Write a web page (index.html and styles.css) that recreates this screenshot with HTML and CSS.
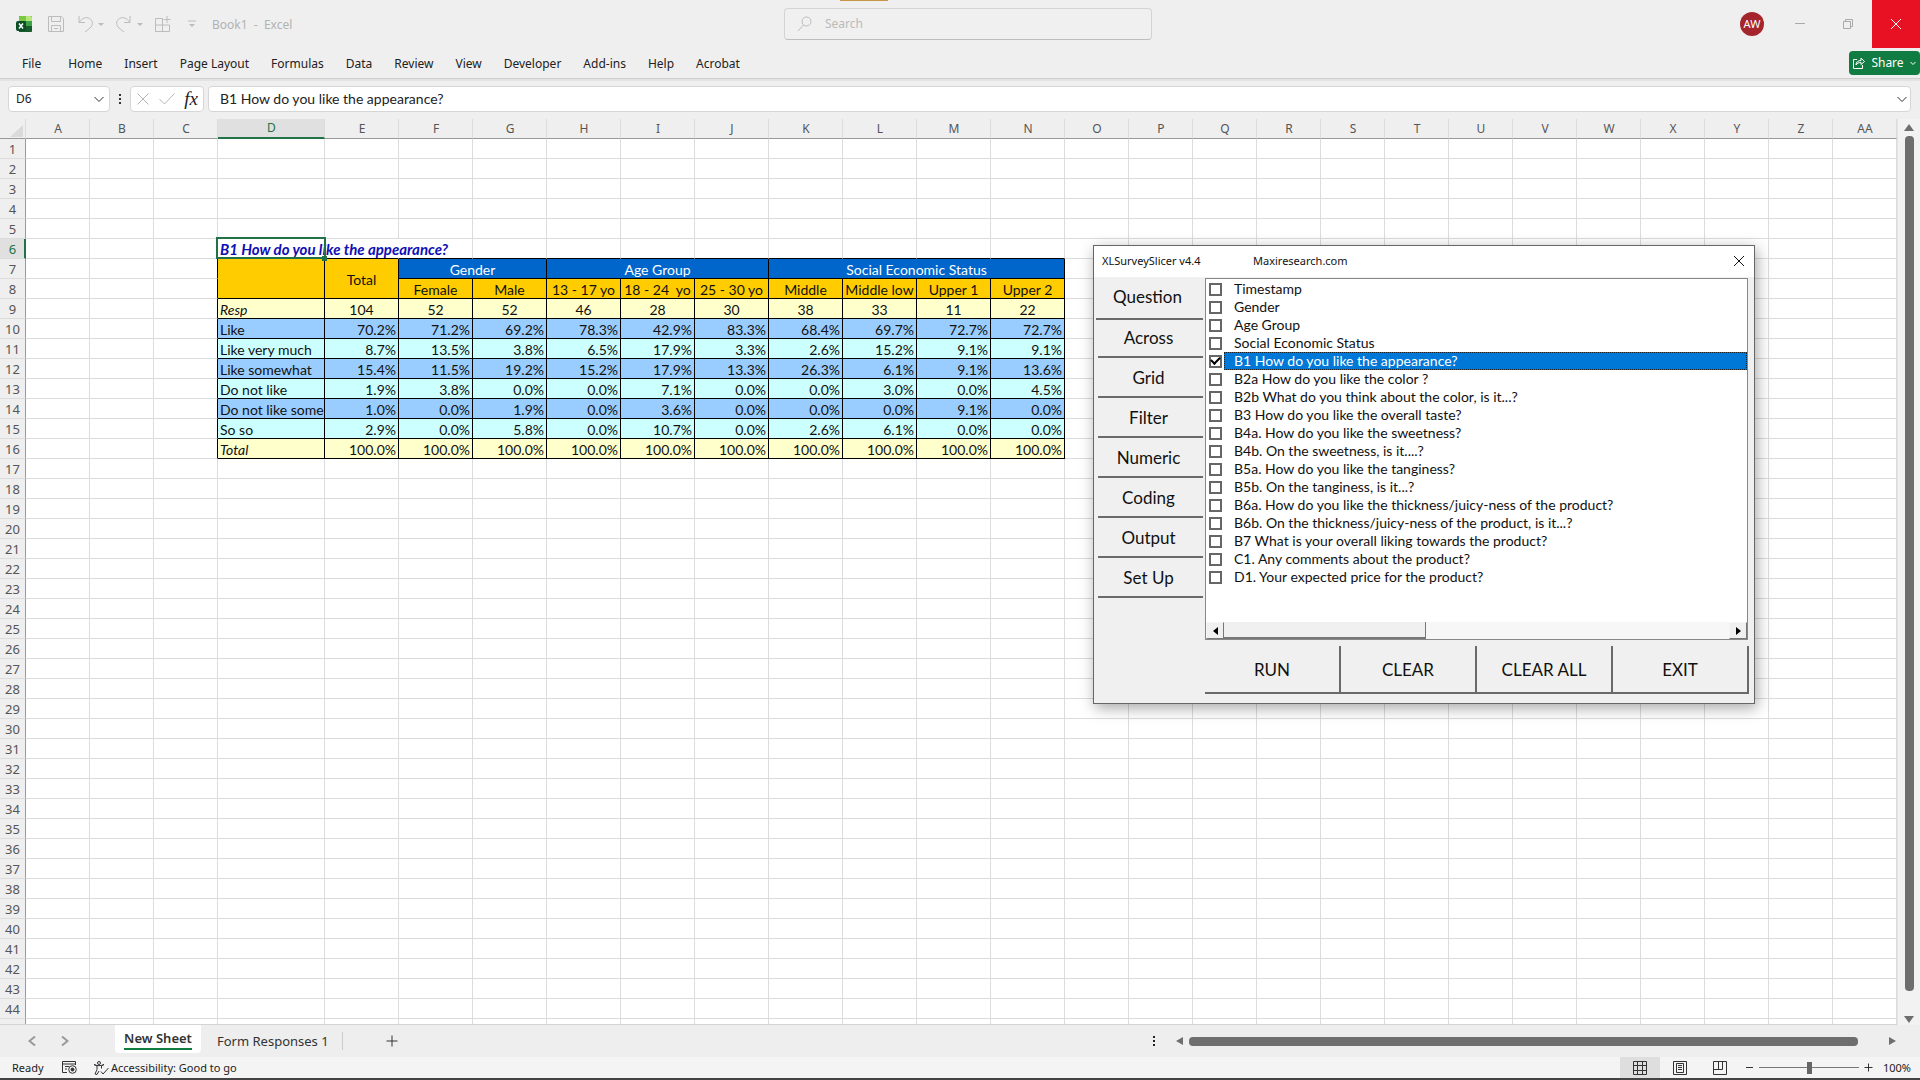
FILE: index.html
```html
<!DOCTYPE html>
<html lang="en">
<head>
<meta charset="utf-8">
<title>Book1 - Excel</title>
<link rel="stylesheet" href="styles.css">
</head>
<body>
<div class="app">
  <header class="titlebar">
    <div class="quick">
      <svg class="logo" width="16" height="16" viewBox="0 0 16 16"><rect x="3" width="13" height="16" rx="1" fill="#1f7a34"/><path d="M4 0h6v5H3V1z" fill="#7bc943"/><path d="M10 0h5l1 1v4h-6z" fill="#b7e67a"/><path d="M10 5h6v5h-6z" fill="#3da243"/><path d="M3 10h13v5l-1 1H3z" fill="#175c2b"/><rect y="5" width="10" height="10" rx="2" fill="#0c4f27"/><path d="M3 7.500l4 5M7 7.500l-4 5" stroke="#fff" stroke-width="1.500"/></svg>
      <button class="qbtn" aria-label="Save"><svg width="16" height="16" viewBox="0 0 16 16"><path d="M.5.500h13l2 2v13H.500zM3.500.500v5h9v-5M3.500 15.500v-6h9v6M6 12.500h4"/></svg></button>
      <button class="qbtn undo" aria-label="Undo"><svg width="28" height="16" viewBox="0 0 28 16"><path d="M1 0v6.500h6M1.500 6C4 2 8 .500 11.500 2.500c4 2.500 3.500 7 .500 9.500l-5 4"/><path class="tri" d="M20 7h6l-3 3z"/></svg></button>
      <button class="qbtn redo" aria-label="Redo"><svg width="28" height="16" viewBox="0 0 28 16"><path d="M14 0v6.500H8M13.500 6C11 2 7 .500 3.500 2.500c-4 2.500-3.500 7-.500 9.500l5 4"/><path class="tri" d="M21 7h6l-3 3z"/></svg></button>
      <button class="qbtn form" aria-label="Form"><svg width="16" height="16" viewBox="0 0 16 16"><path d="M.5 2.500h7v13H.500zM.5 9h14v6.500h-14M7.500 9V2.500M14.500 9v6M12 0v7M8.500 3.500h7"/></svg></button>
      <button class="qbtn more" aria-label="Customize"><svg width="8" height="8" viewBox="0 0 8 8"><path d="M0 1h8"/><path class="tri" d="M1 4h6L4 7z"/></svg></button>
      <span class="doc">Book1 &nbsp;- &nbsp;Excel</span>
    </div>
    <label class="search"><svg width="16" height="16" viewBox="0 0 16 16"><circle cx="9.500" cy="5.500" r="4.500"/><path d="M6.500 9L1 15"/></svg><input type="text" placeholder="Search" aria-label="Search"></label>
    <div class="window">
      <button class="avatar">AW</button>
      <button class="wbtn" aria-label="Minimize"><svg width="12" height="12" viewBox="0 0 12 12"><path d="M1 5.500h10"/></svg></button>
      <button class="wbtn" aria-label="Restore"><svg width="12" height="12" viewBox="0 0 12 12"><path d="M1.500 3.500h7v7h-7zM3.500 3V1.500h7v7H9"/></svg></button>
      <button class="wbtn close" aria-label="Close"><svg width="12" height="12" viewBox="0 0 12 12"><path d="M1 1l10 10M11 1L1 11"/></svg></button>
    </div>
    <div class="accent"></div>
  </header>
  <div class="ribbon">
    <nav class="menus">
      <button class="file">File</button><button>Home</button><button>Insert</button><button>Page Layout</button><button>Formulas</button><button>Data</button><button>Review</button><button>View</button><button>Developer</button><button>Add-ins</button><button>Help</button><button>Acrobat</button>
    </nav>
    <button class="share"><svg width="12" height="12" viewBox="0 0 12 12"><path d="M4 2.500H.500v9h9V8M3 8c0-3 2-4.500 5-4.500V1l3.500 3.500L8 7.500V5.500C6 5.500 4 6 3 8z"/></svg>Share<svg width="6" height="12" viewBox="0 0 6 12"><path d="M.5 5L3 7.500 5.500 5"/></svg></button>
  </div>
  <div class="formula">
    <label class="box name"><input type="text" value="D6" aria-label="Name box"><svg width="10" height="8" viewBox="0 0 10 8"><path d="M.5 2L5 6.500 9.500 2"/></svg></label>
    <svg class="dots" width="4" height="12" viewBox="0 0 4 12"><path d="M1 1h2v2H1zM1 5h2v2H1zM1 9h2v2H1z"/></svg>
    <div class="box fxbox">
      <button aria-label="Cancel"><svg width="12" height="12" viewBox="0 0 12 12"><path d="M.5.500l11 11M11.500.500l-11 11"/></svg></button>
      <button aria-label="Enter"><svg width="16" height="12" viewBox="0 0 16 12"><path d="M.5 6l5 5L15.500.500"/></svg></button>
      <button class="fx">fx</button>
    </div>
    <label class="box content"><input type="text" value="B1 How do you like the appearance?" aria-label="Formula bar"><svg width="10" height="8" viewBox="0 0 10 8"><path d="M.5 2L5 6.500 9.500 2"/></svg></label>
  </div>
  <main class="work">
    <div class="sheet"><table class="grid" id="grid"></table></div>
    <div class="vbar">
      <svg width="10" height="8" viewBox="0 0 10 8"><path d="M5 0l5 7H0z"/></svg>
      <div class="vthumb"></div>
      <svg width="10" height="8" viewBox="0 0 10 8"><path d="M5 8l5-7H0z"/></svg>
    </div>
  </main>
  <div class="tabs">
    <div class="nav">
      <button aria-label="Previous sheet"><svg width="8" height="10" viewBox="0 0 8 10"><path d="M7 .500L1.500 5 7 9.500"/></svg></button>
      <button aria-label="Next sheet"><svg width="8" height="10" viewBox="0 0 8 10"><path d="M1 .500L6.500 5 1 9.500"/></svg></button>
    </div>
    <button class="tab active"><span>New Sheet</span></button>
    <button class="tab">Form Responses 1</button>
    <button class="add" aria-label="New sheet"><svg width="12" height="12" viewBox="0 0 12 12"><path d="M6 .500v11M.5 6h11"/></svg></button>
    <div class="hbar">
      <svg class="hdots" width="2" height="12" viewBox="0 0 2 12"><path d="M0 1h2v2H0zM0 5h2v2H0zM0 9h2v2H0z"/></svg>
      <svg width="8" height="8" viewBox="0 0 8 8"><path d="M0 4l7-4v8z"/></svg>
      <div class="hthumb"></div>
      <svg width="8" height="8" viewBox="0 0 8 8"><path d="M8 4L1 0v8z"/></svg>
    </div>
  </div>
  <footer class="status">
    <span class="ready">Ready</span>
    <button aria-label="Record macro"><svg width="15" height="13" viewBox="0 0 15 13"><path d="M5 11.500H.500V.500h13V4M.5 3h13M3 5.500h4M3 8h2"/><circle cx="10.500" cy="8.500" r="3.800"/><circle cx="10.500" cy="8.500" r="1.500" fill="#333"/></svg></button>
    <button class="access"><svg width="16" height="14" viewBox="0 0 16 14"><circle cx="6" cy="2" r="1.500"/><path d="M1 3.500c3 1.500 7 1.500 10 0M1 3.500l3 1.500v3.500L2 13l2 .500L6 10M11 3.500L8.500 5v2.500M8 10.500l2 2.500 5.500-6"/></svg>Accessibility: Good to go</button>
    <div class="views">
      <button class="view on" aria-label="Normal view"><svg width="14" height="14" viewBox="0 0 14 14"><path d="M.5.500h13v13H.500zM4.500.500v13M9.500.500v13M.5 4.500h13M.5 9.500h13"/></svg></button>
      <button class="view" aria-label="Page layout view"><svg width="14" height="14" viewBox="0 0 14 14"><path d="M.5.500h13v13H.500zM3.500 2.500h7v9h-7zM5 4.500h4M5 6.500h4M5 8.500h4"/></svg></button>
      <button class="view" aria-label="Page break view"><svg width="14" height="14" viewBox="0 0 14 14"><path d="M.5.500h13v13H.500zM.5 8.500h9v-8M5.500.500v8"/></svg></button>
    </div>
    <button aria-label="Zoom out"><svg width="9" height="9" viewBox="0 0 9 9"><path d="M1 4.500h7"/></svg></button>
    <input class="zoom" type="range" min="0" max="100" value="50" aria-label="Zoom">
    <button aria-label="Zoom in"><svg width="9" height="9" viewBox="0 0 9 9"><path d="M.5 4.500h8M4.500.500v8"/></svg></button>
    <button class="pct">100%</button>
  </footer>
  <div class="taskbar"></div>
</div>

<section class="dialog" role="dialog" aria-label="XLSurveySlicer">
  <header class="dtitle"><span class="prod">XLSurveySlicer v4.4</span><span>Maxiresearch.com</span><button aria-label="Close dialog"><svg width="12" height="12" viewBox="0 0 12 12"><path d="M1 1l10 10M11 1L1 11"/></svg></button></header>
  <div class="dbody">
    <nav class="side">
      <button class="current">Question</button><button>Across</button><button>Grid</button><button>Filter</button><button>Numeric</button><button>Coding</button><button>Output</button><button>Set Up</button>
    </nav>
    <div class="pane">
      <div class="listbox">
        <div class="items" id="items"></div>
        <div class="lbar">
          <button aria-label="Scroll left"><svg width="5" height="8" viewBox="0 0 5 8"><path d="M5 0v8L0 4z"/></svg></button>
          <div class="lthumb"></div>
          <button class="rightbtn" aria-label="Scroll right"><svg width="5" height="8" viewBox="0 0 5 8"><path d="M0 0v8l5-4z"/></svg></button>
        </div>
      </div>
      <div class="actions"><button>RUN</button><button>CLEAR</button><button>CLEAR ALL</button><button>EXIT</button></div>
    </div>
  </div>
</section>
<script src="app.js"></script>
</body>
</html>
```
FILE: styles.css
```css
* { box-sizing: border-box; }
html, body { height: 100%; }
body {
  --ui: "Noto Sans", "Open Sans", sans-serif;
  --cell: Lato, "Liberation Sans", sans-serif;
  margin: 0;
  overflow: hidden;
  background: #efefef;
  color: #222;
  font: 12px/16px var(--ui);
}
button, input { margin: 0; padding: 0; border: 0; background: none; color: inherit; font: inherit; outline: 0; }
button { display: flex; align-items: center; justify-content: center; white-space: nowrap; }
svg { display: block; flex: none; fill: none; stroke: #333; stroke-width: 1; }
.app { display: flex; flex-direction: column; height: 100vh; }

/* title bar */
.titlebar { position: relative; display: grid; grid-template-columns: 1fr 368px 1fr; align-items: center; height: 48px; flex: none; padding-left: 16px; }
.accent { position: absolute; top: 0; left: 840px; width: 48px; height: 1px; background: #c99549; }
.quick { display: flex; align-items: center; color: #b2b2b2; }
.quick svg { stroke: #bcbcbc; }
.quick .logo { stroke: none; margin-right: 16px; }
.quick .tri { fill: #bcbcbc; stroke: none; }
.undo { margin-left: 14px; }
.redo { margin-left: 10px; }
.form { margin-left: 11px; }
.more { margin-left: 17px; }
.doc { margin-left: 16px; padding-top: 2px; }
.search { display: flex; align-items: center; gap: 12px; height: 32px; padding: 0 12px; border: 1px solid #d4d4d4; border-bottom-color: #bdbdbd; border-radius: 4px; background: #f0f0f0; }
.search svg { stroke: #bcbcbc; }
.search input { flex: 1; }
.search input::placeholder { color: #bababa; opacity: 1; }
.window { display: flex; align-items: center; justify-content: flex-end; height: 48px; }
.avatar { width: 24px; height: 24px; margin-right: 12px; border-radius: 50%; background: #a4262c; color: #fff; font-size: 11px; }
.wbtn { width: 48px; height: 48px; }
.wbtn svg { stroke: #aaa; }
.close { background: #e81123; }
.close svg { stroke: #fff; }

/* ribbon tabs */
.ribbon { display: flex; align-items: center; justify-content: space-between; height: 31px; flex: none; border-bottom: 1px solid #cfcfcf; }
.menus { display: flex; gap: 22px; padding: 2px 0 0 22px; }
.file { margin-right: 5px; }
.share { gap: 6px; width: 71px; height: 24px; border-radius: 4px; background: #107c41; color: #fff; }
.share svg { stroke: #fff; }

/* formula bar */
.formula { display: flex; align-items: center; height: 40px; flex: none; padding: 0 9px 2px 8px; border-top: 2px solid #e3e3e3; }
.box { display: flex; align-items: center; height: 26px; border: 1px solid #d6d6d6; border-radius: 4px; background: #fff; }
.name { width: 102px; padding: 0 5px 0 7px; }
.name input { flex: 1; min-width: 0; }
.dots { margin: 0 8px; fill: #333; stroke: none; }
.fxbox { width: 74px; padding: 0 5px 0 6px; justify-content: space-between; }
.fxbox svg { stroke: #b5b5b5; }
.fx { font: italic 19px/20px "Liberation Serif", serif; }
.content { flex: 1; margin-left: 4px; padding: 0 3px 0 11px; }
.content input { flex: 1; font: 14px/20px var(--cell); }

/* worksheet */
.work { display: flex; flex: 1; min-height: 0; }
.sheet { flex: 1; min-width: 0; overflow: hidden; background: #fff; border-bottom: 1px solid #d4d4d4; }
.grid { width: 1897px; table-layout: fixed; border-spacing: 0; font: 14px/17px var(--cell); color: #111; }
.grid tr { height: 20px; }
.grid td, .grid th { height: 20px; padding: 2px 0 0; border: 0 solid #dcdcdc; border-width: 0 1px 1px 0; white-space: nowrap; }
.c-row { width: 26px; }
.c-std { width: 64px; }
.c-label { width: 107px; }
.c-data { width: 74px; }
.grid th { background: #efefef; color: #555; font: 12px/17px var(--ui); text-align: center; }
.grid thead th { padding: 0 0 0 1px; line-height: 19px; border-bottom-color: #999; }
.grid tbody th { border-right-color: #999; font-size: 13px; }
.grid thead th.sel { background: #e0e0e0; color: #217346; border-bottom: 2px solid #217346; line-height: 18px; }
.grid tbody th.sel { background: #e0e0e0; color: #217346; border-right: 2px solid #217346; padding-left: 1px; }
.corner svg { margin: 4px 0 0 9px; fill: #dadada; stroke: none; }
.grid td.edge { border-right-color: #000; }
.grid td.top { border-bottom-color: #000; }
.grid td.spill { border-right-color: transparent; }
.grid td.heading { position: relative; padding-left: 2px; color: #0f0fb4; font-size: 15px; font-weight: bold; font-style: italic; }
.heading::after { content: ""; position: absolute; z-index: 2; inset: -2px -2px -1px -2px; border: 2px solid #217346; }
.handle { position: absolute; z-index: 3; right: -3px; bottom: -3px; width: 5px; height: 5px; background: #217346; }
.grid td.b { border-color: #000; text-align: center; }
.grid td.label { padding-left: 2px; overflow: hidden; text-align: left; }
.grid td.num { padding-right: 2px; text-align: right; }
.gold { background: #fc0; }
.blue { background: #06c; color: #fff; }
.cream { background: #ffc; }
.sky { background: #9cf; }
.aqua { background: #cff; }
.it { font-style: italic; }

.vbar { display: flex; flex-direction: column; align-items: center; gap: 4px; width: 23px; padding: 5px 0 2px; background: #f2f2f2; border-left: 1px solid #e2e2e2; }
.vbar svg, .hbar svg { fill: #6e6e6e; stroke: none; }
.vthumb { flex: 1; width: 9px; margin-bottom: 20px; border-radius: 4px; background: #6e6e6e; }

/* sheet tabs */
.tabs { display: flex; align-items: center; height: 32px; flex: none; background: #eee; }
.nav { display: flex; gap: 25px; width: 115px; padding-left: 28px; }
.nav svg { stroke: #999; stroke-width: 2; }
.tab { position: relative; padding: 0 14px; font-size: 13px; line-height: 20px; color: #333; }
.tab::after { content: ""; position: absolute; right: 0; top: 1px; width: 1px; height: 18px; background: #ccc; }
.tab.active { align-self: flex-start; height: 28px; width: 86px; margin-right: 2px; padding: 0; border-radius: 0 0 4px 4px; background: #fff; font-weight: 600; }
.tab.active::after { display: none; }
.tab.active span { border-bottom: 2px solid #107c41; }
.add { margin-left: 43px; }
.hbar { display: flex; align-items: center; gap: 5px; width: 767px; margin-left: auto; padding-right: 24px; }
.hdots { margin-right: 16px; }
.hbar .hdots { fill: #222; }
.hthumb { flex: 1; height: 9px; margin-right: 25px; border-radius: 4px; background: #6e6e6e; }

/* status bar */
.status { display: flex; align-items: center; height: 21px; flex: none; padding: 0 9px 0 12px; background: #f4f4f4; font-size: 11px; }
.ready { width: 50px; }
.access { gap: 2px; margin-left: 16px; }
.views { display: flex; margin-left: auto; margin-right: 5px; }
.view { width: 40px; height: 21px; }
.view.on { background: #dedede; }
.zoom { appearance: none; width: 100px; height: 12px; margin: 0 5px; background: linear-gradient(#777, #777) center / 100% 1px no-repeat; }
.zoom::-webkit-slider-thumb { appearance: none; width: 5px; height: 12px; background: #666; }
.pct { width: 38px; justify-content: flex-end; }
.taskbar { height: 2px; flex: none; background: #454344; }

/* survey dialog */
.dialog { position: absolute; left: 1093px; top: 245px; width: 662px; border: 1px solid #666; background: #f0f0f0; box-shadow: 2px 4px 14px rgba(0, 0, 0, .35); color: #111; }
.dtitle { display: flex; align-items: center; height: 31px; padding: 0 9px 2px 8px; background: #fff; font-size: 11px; }
.prod { width: 151px; }
.dtitle button { margin-left: auto; }
.dtitle svg { stroke: #111; }
.dbody { display: flex; padding: 1px 5px 9px 0; }
.side { display: flex; flex-direction: column; width: 111px; padding: 0 2px 0 4px; }
.side button { height: 40px; padding: 2px 4px 0 0; border-bottom: 2px solid #6a6a6a; font: 17px/24px var(--cell); }
.side .current { height: 42px; margin-left: -2px; padding: 0 4px 3px 0; }
.side button:nth-child(2) { height: 38px; padding-top: 0; }
.pane { flex: 1; min-width: 0; }
.listbox { height: 362px; display: flex; flex-direction: column; border: 1px solid #888; background: #fff; margin-right: 1px; }
.items { flex: 1; padding-top: 1px; }
.item { display: flex; align-items: center; gap: 2px; height: 18px; padding-left: 3px; font: 14px/16px var(--cell); }
.item input { appearance: none; display: grid; place-items: center; width: 13px; height: 13px; border: 2px solid #666; background: #fff; flex: none; }
.item input:checked::after { content: ""; width: 7px; height: 4px; border: solid #000; border-width: 0 0 2px 2px; transform: rotate(-45deg) translate(1px, -1px); }
.item span { flex: 1; height: 18px; line-height: 18px; padding-left: 10px; white-space: nowrap; }
.item.picked span { background: #0078d7; color: #fff; outline: 1px dotted #222; outline-offset: -1px; }
.lbar { display: flex; height: 17px; background: #f7f7f7; }
.lbar svg { fill: #000; stroke: none; }
.lbar button { width: 18px; border: 1px solid #f5f5f5; border-right-color: #777; border-bottom-color: #777; background: #f0f0f0; }
.lbar .rightbtn { margin-left: auto; }
.lthumb { width: 202px; border: solid #777; border-width: 0 1px 2px 0; background: #f0f0f0; }
.actions { display: grid; grid-template-columns: repeat(4, 1fr); margin-top: 6px; }
.actions button { height: 48px; padding-top: 2px; border: solid #6a6a6a; border-width: 0 2px 2px 0; font: 17px/24px var(--cell); }
```
FILE: app.js
```js
const letters = [..."ABCDEFGHIJKLMNOPQRSTUVWXYZ", "AA"];
const labelCol = 3;
const lastCol = 13;

const heads = ["Female", "Male", "13 - 17 yo", "18 - 24&nbsp; yo", "25 - 30 yo", "Middle", "Middle low", "Upper 1", "Upper 2"];
const groups = [["Gender", 2], ["Age Group", 3], ["Social Economic Status", 4]];
const data = {
  9: ["cream", "Resp", "104 52 52 46 28 30 38 33 11 22"],
  10: ["sky", "Like", "70.2% 71.2% 69.2% 78.3% 42.9% 83.3% 68.4% 69.7% 72.7% 72.7%"],
  11: ["aqua", "Like very much", "8.7% 13.5% 3.8% 6.5% 17.9% 3.3% 2.6% 15.2% 9.1% 9.1%"],
  12: ["sky", "Like somewhat", "15.4% 11.5% 19.2% 15.2% 17.9% 13.3% 26.3% 6.1% 9.1% 13.6%"],
  13: ["aqua", "Do not like", "1.9% 3.8% 0.0% 0.0% 7.1% 0.0% 0.0% 3.0% 0.0% 4.5%"],
  14: ["sky", "Do not like some", "1.0% 0.0% 1.9% 0.0% 3.6% 0.0% 0.0% 0.0% 9.1% 0.0%"],
  15: ["aqua", "So so", "2.9% 0.0% 5.8% 0.0% 10.7% 0.0% 2.6% 6.1% 0.0% 0.0%"],
  16: ["cream", "Total", "100.0% 100.0% 100.0% 100.0% 100.0% 100.0% 100.0% 100.0% 100.0% 100.0%"]
};

function block(row) {
  if (row === 7) {
    return '<td class="b gold" rowspan="2"></td><td class="b gold" rowspan="2">Total</td>' +
      groups.map(([name, span]) => `<td class="b blue" colspan="${span}">${name}</td>`).join("");
  }
  if (row === 8) return heads.map(h => `<td class="b gold">${h}</td>`).join("");
  const [tone, label, values] = data[row];
  const slant = tone === "cream" ? " it" : "";
  const kind = row === 9 ? "" : " num";
  return `<td class="b label ${tone}${slant}">${label}</td>` +
    values.split(" ").map(v => `<td class="b ${tone}${kind}">${v}</td>`).join("");
}

function bodyRow(row) {
  let html = `<tr><th class="${row === 6 ? "sel" : ""}">${row < 45 ? row : ""}</th>`;
  for (let c = 0; c < letters.length; c++) {
    if (row >= 7 && row <= 16 && c === labelCol) {
      html += block(row);
      c = lastCol;
    } else if (row === 6 && c === labelCol) {
      html += '<td class="heading top">B1 How do you like the appearance?<i class="handle"></i></td>';
    } else {
      const cls = [];
      if (row === 6 && c > labelCol && c <= lastCol) cls.push("top");
      if (row === 6 && c === labelCol + 1) cls.push("spill");
      if (row >= 7 && row <= 16 && c === labelCol - 1) cls.push("edge");
      html += `<td class="${cls.join(" ")}"></td>`;
    }
  }
  return html + "</tr>";
}

const cols = '<colgroup><col class="c-row">' + letters.map((_, c) =>
  `<col class="${c === labelCol ? "c-label" : c > labelCol && c <= lastCol ? "c-data" : "c-std"}">`).join("") + "</colgroup>";
const head = '<thead><tr><th class="corner"><svg width="13" height="12" viewBox="0 0 13 12"><path d="M13 0v12H0z"/></svg></th>' +
  letters.map((l, c) => `<th class="${c === labelCol ? "sel" : ""}">${l}</th>`).join("") + "</tr></thead>";
const rows = Array.from({ length: 45 }, (_, i) => bodyRow(i + 1)).join("");
document.getElementById("grid").innerHTML = cols + head + "<tbody>" + rows + "</tbody>";

const questions = [
  "Timestamp", "Gender", "Age Group", "Social Economic Status",
  "B1 How do you like the appearance?", "B2a How do you like the color ?",
  "B2b What do you think about the color, is it...?", "B3 How do you like the overall taste?",
  "B4a. How do you like the sweetness?", "B4b. On the sweetness, is it....?",
  "B5a. How do you like the tanginess?", "B5b. On the tanginess, is it...?",
  "B6a. How do you like the thickness/juicy-ness of the product?",
  "B6b. On the thickness/juicy-ness of the product, is it...?",
  "B7 What is your overall liking towards the product?",
  "C1. Any comments about the product?", "D1. Your expected price for the product?"
];
document.getElementById("items").innerHTML = questions.map((q, i) =>
  `<label class="item${i === 4 ? " picked" : ""}"><input type="checkbox"${i === 4 ? " checked" : ""}><span>${q}</span></label>`).join("");
```
